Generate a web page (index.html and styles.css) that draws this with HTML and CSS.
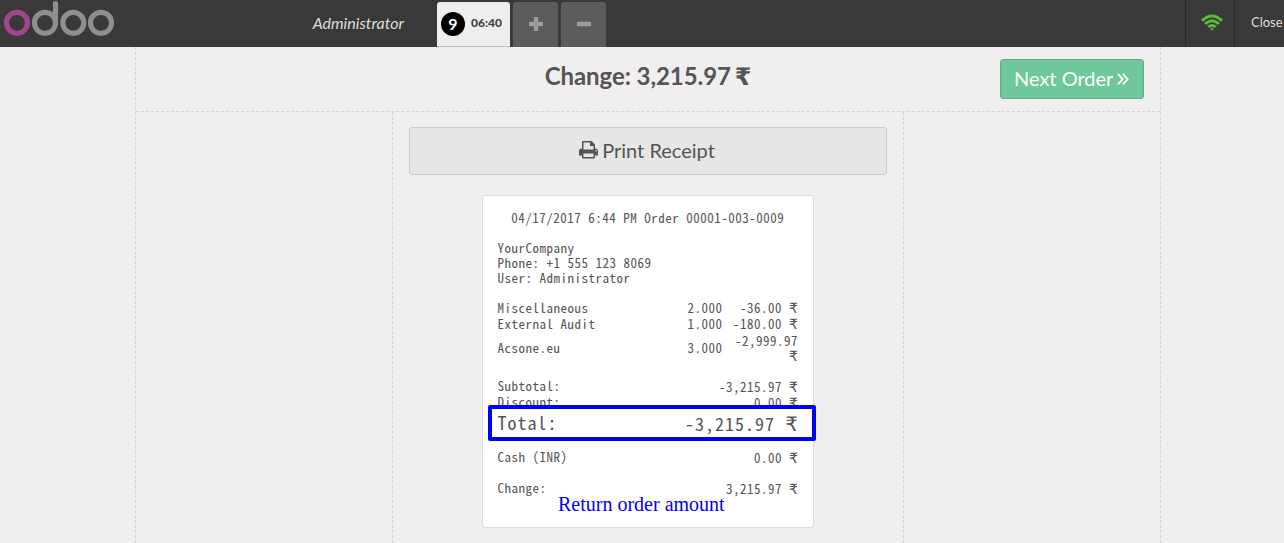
FILE: index.html
```html
<!DOCTYPE html>
<html lang="en">
<head>
<meta charset="utf-8">
<title>Point of Sale</title>
<link rel="stylesheet" href="styles.css">
</head>
<body>
<div class="pos">
  <header class="topbar">
    <svg class="logo" width="120" height="47" viewBox="0 0 120 47" fill="none" stroke="#8f8f8f" stroke-width="5.2">
      <circle cx="17" cy="22.8" r="10.5" stroke="#a24689"/>
      <circle cx="45" cy="22.8" r="10.5"/>
      <path d="M55.5 23V3.6" stroke-linecap="round"/>
      <circle cx="73.3" cy="22.8" r="10.5"/>
      <circle cx="101" cy="22.8" r="10.5"/>
    </svg>
    <span class="username">Administrator</span>
    <nav class="orders">
      <div class="tab selected"><span class="seq">9</span><span class="time">06:40</span></div>
      <div class="tab square"><svg width="16" height="16" viewBox="0 0 16 16"><path fill="#9d9d9d" d="M6.500 1h3q.7 0 .7.7v4.100h4.100q.7 0 .7.7v3q0 .7-.7.7h-4.100v4.100q0 .7-.7.7h-3q-.7 0-.7-.7v-4.100H1.700q-.7 0-.7-.7v-3q0-.7.7-.7h4.100V1.700q0-.7.7-.7z"/></svg></div>
      <div class="tab square"><svg width="16" height="16" viewBox="0 0 16 16"><rect x="1" y="5.800" width="14" height="4.400" rx=".8" fill="#9d9d9d"/></svg></div>
    </nav>
    <div class="status">
      <svg width="22" height="17" viewBox="0 0 22 17" fill="none" stroke="#5eb937" stroke-width="2.900"><path d="M1 6.600Q11-2.800 21 6.600M4.100 9.900Q11 3.600 17.900 9.900M7.300 13Q11 9.800 14.700 13"/><path fill="#5eb937" stroke="none" d="M9 14.600Q11 13.200 13 14.600L11 16.800z"/></svg>
    </div>
    <div class="close">Close</div>
  </header>
  <main class="screen">
    <div class="top-content">
      <h1 class="change">Change: 3,215.97 <span class="rupee">₹</span></h1>
      <div class="next">Next Order<svg width="12" height="14" viewBox="0 0 12 14" fill="none" stroke="#fff" stroke-width="1.900"><path d="M1 2 5.600 7.200 1 12.400M6 2 10.600 7.200 6 12.400"/></svg></div>
    </div>
    <div class="columns">
      <div class="side"></div>
      <div class="center">
        <div class="print"><svg width="19" height="18" viewBox="0 0 19 18"><path fill="#555" fill-rule="evenodd" d="M4 0h8.500L16 3.500V7.500q3 0 3 2.700V14.500h-3V16.500q0 1-1 1H4q-1 0-1-1v-2H0V10.200q0-2.700 3-2.700V1q0-1 1-1zM4.500 1.500V8.500h10V5H11V1.500zM4.500 12.500V16h10v-3.500zM16.400 9.300v1.300h1.300V9.300z"/></svg><span>Print Receipt</span></div>
        <div class="receipt">
          <div class="stamp">04/17/2017 6:44 PM Order 00001-003-0009</div>
          <div class="company">YourCompany<br>Phone: +1 555 123 8069<br>User: Administrator</div>
          <div class="lines">
            <div class="line"><span>Miscellaneous</span><span class="qty">2.000</span><span class="amount">-36.00 <b>₹</b></span></div>
            <div class="line"><span>External Audit</span><span class="qty">1.000</span><span class="amount">-180.00 <b>₹</b></span></div>
            <div class="line tall"><span>Acsone.eu</span><span class="qty">3.000</span><span class="amount">-2,999.97<br><b>₹</b></span></div>
          </div>
          <div class="totals">
            <div class="row"><span>Subtotal:</span><span class="amount">-3,215.97 <b>₹</b></span></div>
            <div class="row"><span>Discount:</span><span class="amount">0.00 <b>₹</b></span></div>
            <div class="row total"><span>Total:</span><span class="amount">-3,215.97 <b>₹</b></span></div>
          </div>
          <div class="row cash"><span>Cash (INR)</span><span class="amount">0.00 <b>₹</b></span></div>
          <div class="row"><span>Change:</span><span class="amount">3,215.97 <b>₹</b></span></div>
          <div class="highlight"></div>
          <div class="note">Return order amount</div>
        </div>
      </div>
      <div class="side"></div>
    </div>
  </main>
</div>
</body>
</html>
```
FILE: styles.css
```css
* { box-sizing: border-box; }
body { margin: 0; background: #f0eeee; color: #555; font-family: Lato, sans-serif; }
.pos { width: 1284px; height: 543px; display: flex; flex-direction: column; overflow: hidden; }
.topbar { height: 47px; flex: none; display: flex; background: #393939; color: #ddd; }
.logo { flex: none; }
.username { width: 317px; padding-right: 33px; text-align: right; font-size: 16px; font-style: italic; line-height: 46px; }
.orders { display: flex; gap: 3px; padding-top: 2px; flex: 1; }
.tab { border-radius: 3px 3px 0 0; display: flex; align-items: center; }
.selected { width: 73px; background: #eee; color: #444; border-bottom: 1px solid #bbb; padding-left: 4px; gap: 6px; }
.square { width: 45px; background: #5b5b5b; justify-content: center; }
.square svg { margin-bottom: 1px; }
.seq { width: 24px; height: 24px; border-radius: 50%; background: #000; color: #fff; font-size: 16px; font-weight: 700; line-height: 23px; text-align: center; }
.time { font-size: 12px; font-weight: 900; margin-bottom: 3px; }
.status { width: 49px; border-left: 1px solid #292929; padding: 14px 0 0 15px; }
.close { width: 50px; border-left: 1px solid #292929; padding-left: 16px; font-size: 13px; line-height: 45px; }
.screen { width: 1026px; margin-left: 135px; flex: 1; display: flex; flex-direction: column; border: dashed #d5d3d3; border-width: 0 1px; }
.top-content { height: 65px; flex: none; border-bottom: 1px dashed #d5d3d3; display: grid; grid-template-columns: 1fr 144px; padding: 12px 16px 0 160px; }
.change { margin: 0; font-size: 24px; line-height: 34px; text-align: center; white-space: pre; letter-spacing: -.06px; }
.rupee { font-family: "DejaVu Sans", sans-serif; font-size: 24px; line-height: 24px; margin-left: -2px; }
.next { height: 40px; background: #6ec89b; border: 1px solid #64af8a; border-radius: 3px; color: #fff; font-size: 20px; line-height: 37px; padding-left: 13px; white-space: nowrap; }
.next svg { margin-left: 4px; }
.columns { flex: 1; display: grid; grid-template-columns: 256px 512px 256px; }
.center { border: dashed #d5d3d3; border-width: 0 1px; padding: 15px 16px 0; display: flex; flex-direction: column; align-items: center; }
.print { width: 478px; height: 48px; background: #e6e6e6; border: 1px solid #ccc; border-radius: 3px; font-size: 20px; display: flex; gap: 4px; align-items: center; justify-content: center; padding: 0 2px 2px 0; }
.receipt { position: relative; width: 332px; height: 333px; margin-top: 20px; background: #fff; border: 1px solid #ddd; border-radius: 3px; padding: 14px 15px 0 14.5px; font: 13px/15px "Noto Sans Mono CJK SC", "DejaVu Sans Mono", monospace; letter-spacing: .5px; }
.stamp { text-align: center; }
.company { margin-top: 15px; }
.lines { margin-top: 14px; }
.line { display: grid; grid-template-columns: 150px 75px 75.5px; align-items: center; height: 16px; }
.line.tall { height: 32px; line-height: 15px; }
.qty, .amount { text-align: right; white-space: nowrap; }
.amount { padding-top: 1px; }
.amount b { display: inline-block; width: 9px; height: 14px; font: 14px/14px "DejaVu Sans", sans-serif; letter-spacing: 0; text-align: right; }
.totals { margin-top: 15px; }
.row { display: flex; justify-content: space-between; height: 16px; }
.row.total { height: 24px; font-size: 18px; line-height: 24px; letter-spacing: 1px; }
.total b { width: 13px; height: 20px; font-size: 20px; line-height: 20px; }
.cash { margin: 15px 0; }
.highlight { position: absolute; left: 5px; top: 209px; width: 328px; height: 36px; border: 4px solid #0000fe; border-radius: 2px; }
.note { position: absolute; left: 75px; top: 297px; color: #0000f0; font: 20px/23px "Liberation Serif", serif; letter-spacing: 0; }
```
